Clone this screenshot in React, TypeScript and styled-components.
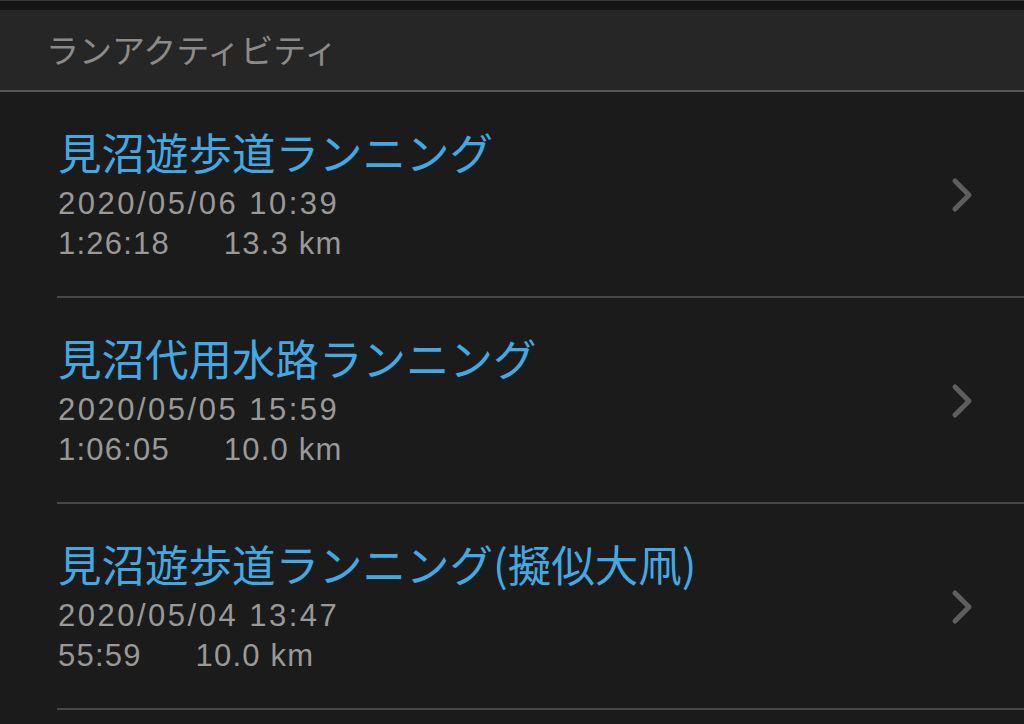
import React from "react";
import styled, { createGlobalStyle } from "styled-components";

const Global = createGlobalStyle`
  html, body {
    margin: 0;
    padding: 0;
    background: #1b1b1b;
    width: 1024px;
    height: 724px;
    overflow: hidden;
  }
  * { box-sizing: border-box; }
`;

const Screen = styled.div`
  width: 1024px;
  height: 724px;
  background: #1b1b1b;
  display: flex;
  flex-direction: column;
  font-family: "Liberation Sans", "Noto Sans CJK JP", sans-serif;
`;

const TopStrip = styled.div`
  height: 10px;
  background: #151515;
  border-top: 1px solid #3a3a3a;
`;

const Header = styled.div`
  height: 82px;
  background: #262626;
  border-bottom: 2px solid #565656;
  display: flex;
  align-items: center;
  padding-left: 46px;
  padding-bottom: 2px;
`;

const HeaderTitle = styled.span`
  font-family: "Noto Sans CJK JP", sans-serif;
  font-size: 33px;
  color: #8b8b8b;
`;

const List = styled.div`
  display: flex;
  flex-direction: column;
`;

const Row = styled.div`
  height: 206px;
  margin-left: 57px;
  border-bottom: 2px solid #484848;
  display: flex;
  align-items: center;
  padding-left: 1px;
  padding-right: 48px;
  padding-top: 2px;
`;

const Info = styled.div`
  flex: 1;
  display: flex;
  flex-direction: column;
`;

const Title = styled.div`
  font-family: "Noto Sans CJK JP", sans-serif;
  font-size: 43.5px;
  line-height: 52px;
  color: #42a9e2;
  margin-bottom: 6px;
`;

const Meta = styled.div<{ $spacing: number }>`
  font-family: "Liberation Sans", sans-serif;
  font-size: 31px;
  line-height: 40px;
  letter-spacing: ${(p) => p.$spacing}px;
  color: #999999;
  display: flex;
`;

const Distance = styled.span`
  margin-left: 54px;
`;

const Chevron = styled.svg`
  width: 26px;
  height: 40px;
  flex: none;
`;

type Activity = { title: string; date: string; duration: string; distance: string };

const activities: Activity[] = [
  { title: "見沼遊歩道ランニング", date: "2020/05/06 10:39", duration: "1:26:18", distance: "13.3 km" },
  { title: "見沼代用水路ランニング", date: "2020/05/05 15:59", duration: "1:06:05", distance: "10.0 km" },
  { title: "見沼遊歩道ランニング(擬似大凧)", date: "2020/05/04 13:47", duration: "55:59", distance: "10.0 km" },
];

export default function App() {
  return (
    <>
      <Global />
      <Screen>
        <TopStrip />
        <Header>
          <HeaderTitle>ランアクティビティ</HeaderTitle>
        </Header>
        <List>
          {activities.map((a) => (
            <Row key={a.date}>
              <Info>
                <Title>{a.title}</Title>
                <Meta $spacing={2.5}>{a.date}</Meta>
                <Meta $spacing={1.2}>
                  <span>{a.duration}</span>
                  <Distance>{a.distance}</Distance>
                </Meta>
              </Info>
              <Chevron viewBox="0 0 26 40">
                <path
                  d="M5 6 L19 20 L5 34"
                  fill="none"
                  stroke="#5e5e5e"
                  strokeWidth="5"
                  strokeLinecap="round"
                  strokeLinejoin="round"
                />
              </Chevron>
            </Row>
          ))}
        </List>
      </Screen>
    </>
  );
}
